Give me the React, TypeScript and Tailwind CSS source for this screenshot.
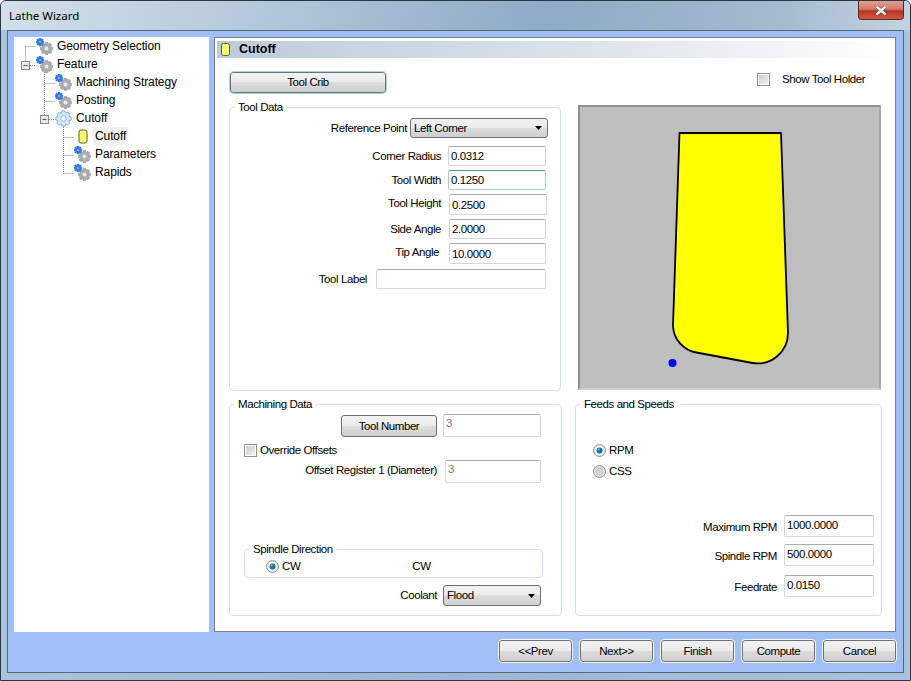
import React from "react";

function gearPath(cx: number, cy: number, ro: number, ri: number, teeth: number) {
  const pts: string[] = [];
  const step = (Math.PI * 2) / teeth;
  for (let i = 0; i < teeth; i++) {
    const a = i * step;
    const seq: [number, number][] = [
      [ri, a - step * 0.5],
      [ro, a - step * 0.25],
      [ro, a + step * 0.25],
    ];
    seq.forEach(([r, t]) => pts.push(`${(cx + r * Math.cos(t)).toFixed(2)} ${(cy + r * Math.sin(t)).toFixed(2)}`));
  }
  return "M" + pts.join("L") + "Z";
}

function GearPair() {
  return (
    <svg width="17" height="17" viewBox="0 0 17 17" className="shrink-0 mt-[1px]">
      <path d={gearPath(10.5, 10.5, 6.3, 4.6, 8)} fill="#a9acb1" stroke="#8b8e93" strokeWidth="0.5" />
      <circle cx="10.5" cy="10.5" r="2" fill="#e8e8ea" />
      <path d={gearPath(4, 4, 4, 2.8, 8)} fill="#2f7ce6" stroke="#1f62c8" strokeWidth="0.4" />
      <circle cx="4" cy="4" r="1.1" fill="#8fbdf5" />
    </svg>
  );
}

function OpenGear() {
  return (
    <svg width="17" height="17" viewBox="0 0 17 17" className="shrink-0">
      <path d={gearPath(8.5, 8.5, 7.8, 5.9, 8)} fill="#d5e6fb" stroke="#80b3ee" strokeWidth="1" />
      <circle cx="8.5" cy="8.5" r="2.8" fill="#ffffff" stroke="#80b3ee" strokeWidth="1" />
    </svg>
  );
}

function ToolIcon() {
  return (
    <svg width="10" height="15" viewBox="0 0 10 15" className="shrink-0">
      <rect x="1" y="1" width="8" height="13" rx="2" fill="#ffff66" stroke="#555a40" strokeWidth="1" />
    </svg>
  );
}

function TreeRow({ indent, icon, text, selected }: { indent: string; icon: React.ReactNode; text: string; selected?: boolean }) {
  return (
    <div className={`flex h-[18px] items-center ${indent}`}>
      <span className="flex w-[17px] justify-center">{icon}</span>
      <span className={`ml-[2px] px-[2px] leading-[18px] ${selected ? "bg-[#f0f0f0]" : ""}`}>{text}</span>
    </div>
  );
}

function Tree() {
  return (
    <div className="relative h-[595px] w-[195px] bg-white text-[12px] tracking-[-0.1px] text-black">
      <svg className="absolute left-0 top-0" width="80" height="150" fill="none" stroke="#808080" strokeDasharray="1 1">
        <path d="M11.5 9.5H22M11.5 9.5V24" />
        <path d="M16 28.5H22" />
        <path d="M30.5 33V78M30.5 46.5H41M30.5 64.5H41" />
        <path d="M35 82.5H41" />
        <path d="M49.5 88V136.5M49.5 100.5H60M49.5 118.5H60M49.5 136.5H60" />
        <rect x="7.5" y="24.5" width="8" height="8" fill="#e8e8e8" stroke="#8a8a8a" strokeDasharray="none" />
        <path d="M9.5 28.5H13.5" stroke="#4a5a70" strokeDasharray="none" />
        <rect x="26.5" y="78.5" width="8" height="8" fill="#e8e8e8" stroke="#8a8a8a" strokeDasharray="none" />
        <path d="M28.5 82.5H32.5" stroke="#4a5a70" strokeDasharray="none" />
      </svg>
      <div className="relative">
        <TreeRow indent="pl-[22px]" icon={<GearPair />} text="Geometry Selection" />
        <TreeRow indent="pl-[22px]" icon={<GearPair />} text="Feature" />
        <TreeRow indent="pl-[41px]" icon={<GearPair />} text="Machining Strategy" />
        <TreeRow indent="pl-[41px]" icon={<GearPair />} text="Posting" />
        <TreeRow indent="pl-[41px]" icon={<OpenGear />} text="Cutoff" />
        <TreeRow indent="pl-[60px]" icon={<ToolIcon />} text="Cutoff" selected />
        <TreeRow indent="pl-[60px]" icon={<GearPair />} text="Parameters" />
        <TreeRow indent="pl-[60px]" icon={<GearPair />} text="Rapids" />
      </div>
    </div>
  );
}

function Group({ title, className, children }: { title: string; className: string; children?: React.ReactNode }) {
  return (
    <div className={`relative rounded-[4px] border border-[#d5dfe5] ${className}`}>
      <span className="absolute left-[4px] top-[-8px] whitespace-nowrap bg-white px-[4px] leading-[14px]">{title}</span>
      {children}
    </div>
  );
}

function TextBox({ value, className, muted }: { value: string; className: string; muted?: boolean }) {
  return (
    <input
      readOnly
      value={value}
      className={`shrink-0 rounded-[2px] border bg-white px-[2px] text-[11.5px] tracking-[-0.4px] outline-none ${muted ? "text-[#8a6d6d]" : "text-black"} ${className}`}
    />
  );
}

const boxBorder = "border-[#d3d6d9] border-t-[#a9acb0]";

function Combo({ value, className }: { value: string; className: string }) {
  return (
    <div className={`flex shrink-0 items-center justify-between rounded-[3px] border border-[#707070] bg-[linear-gradient(#f2f2f2_0%,#ebebeb_48%,#dddddd_50%,#cfcfcf_100%)] pl-[3px] pr-[5px] ${className}`}>
      <span>{value}</span>
      <svg width="7" height="4" viewBox="0 0 7 4">
        <path d="M0 0H7L3.5 4Z" fill="#000" />
      </svg>
    </div>
  );
}

function Btn({ label, className }: { label: string; className: string }) {
  return (
    <button className={`flex shrink-0 items-center justify-center rounded-[3px] border border-[#707070] bg-[linear-gradient(#f2f2f2_0%,#ebebeb_48%,#dddddd_50%,#cfcfcf_100%)] text-black ${className}`}>
      {label}
    </button>
  );
}

function WizBtn({ label }: { label: string }) {
  return <Btn label={label} className="h-[22px] w-[73px] outline outline-1 outline-[#f4f7fc]" />;
}

function Check() {
  return (
    <span className="block h-[13px] w-[13px] shrink-0 border border-[#8e8f8f] bg-white p-[1px]">
      <span className="block h-full w-full bg-[linear-gradient(135deg,#cbcfd4,#eeeff1)]" />
    </span>
  );
}

function Radio({ on }: { on?: boolean }) {
  return (
    <svg width="13" height="13" viewBox="0 0 13 13" className="shrink-0">
      <circle cx="6.5" cy="6.5" r="6" fill="#e6e6e6" stroke="#8e8f8f" />
      <circle cx="6.5" cy="6.5" r="4.5" fill={on ? "#f6f6f6" : "#d2d2d2"} />
      {on && <circle cx="6.5" cy="6.5" r="3" fill="#0f6fb0" />}
      {on && <circle cx="5.8" cy="5.6" r="1" fill="#7cc4ee" />}
    </svg>
  );
}

function Preview() {
  return (
    <div className="ml-[17px] mt-[12px] h-[285px] w-[303px] border-2 border-[#8f8f8f] border-r-[#a8a8a8] border-b-[#d0d0d0] bg-[#bebebe]">
      <svg width="299" height="281" viewBox="0 0 299 281">
        <path
          d="M99.5 26H201L208 226A30.5 30.5 0 0 1 172.5 256L116.5 245.5A28 28 0 0 1 93 219Z"
          fill="#ffff00"
          stroke="#000"
          strokeWidth="1.8"
          strokeLinejoin="round"
        />
        <circle cx="92.5" cy="256" r="4" fill="#0000ff" />
      </svg>
    </div>
  );
}

export default function App() {
  return (
    <div className="flex h-[681px] w-[911px] flex-col overflow-hidden rounded-t-[6px] border border-[#2b3642] bg-[linear-gradient(90deg,#a9c3da,#9ab8d4_50%,#a9c3da)] font-['Liberation_Sans',Arial,sans-serif] text-[11.5px] leading-[13px] tracking-[-0.42px] text-black">
      <div className="flex h-[29px] shrink-0 items-start justify-between bg-[linear-gradient(100deg,#d3dfe9_0%,#b7cbdc_25%,#8eaac6_60%,#a3bacf_85%,#c3d3e1_100%)]">
        <span className="ml-[8px] mt-[5px] font-['Noto_Sans',sans-serif] text-[11.5px] leading-[20px] tracking-normal">Lathe Wizard</span>
        <div className="mr-[6px] flex h-[19px] w-[46px] items-center justify-center rounded-b-[4px] border border-t-0 border-[#5a2a26] bg-[linear-gradient(#e0a090_0%,#d47a66_45%,#b8331f_55%,#cf5a42_100%)]">
          <svg width="14" height="11" viewBox="0 0 14 11">
            <path d="M2.5 1.5L11.5 9.5M11.5 1.5L2.5 9.5" stroke="#3a3f4a" strokeWidth="3.6" />
            <path d="M2.5 1.5L11.5 9.5M11.5 1.5L2.5 9.5" stroke="#eef0f2" strokeWidth="2.4" />
          </svg>
        </div>
      </div>

      <div className="mx-[6px] flex h-[643px] shrink-0 flex-col border border-[#56677a] bg-[#a0bff4]">
        <div className="flex pl-[6px] pt-[6px]">
          <Tree />
          <div className="ml-[5px] flex h-[595px] w-[682px] flex-col border border-[#7a7f88] bg-white">
            <div className="ml-[2px] mt-[3px] flex h-[17px] w-[677px] items-center bg-[linear-gradient(90deg,#bccbdb_0%,#dce3ea_55%,#ffffff_100%)]">
              <span className="ml-[3px] flex w-[10px] justify-center">
                <svg width="9" height="13" viewBox="0 0 9 13">
                  <rect x="0.5" y="0.5" width="8" height="12" rx="2" fill="#ffff66" stroke="#555a40" />
                </svg>
              </span>
              <span className="ml-[9px] text-[12.5px] font-bold tracking-normal">Cutoff</span>
            </div>

            <div className="mt-[14px] flex items-start">
              <Btn
                label="Tool Crib"
                className="ml-[15px] h-[21px] w-[156px] border-[#3c7fb1] outline outline-1 outline-[#a9d7ef]"
              />
              <div className="ml-auto mr-[27px] mt-[1px] flex w-[111px] items-center">
                <Check />
                <span className="ml-[12px] whitespace-nowrap">Show Tool Holder</span>
              </div>
            </div>

            <div className="flex items-start">
              <Group title="Tool Data" className="ml-[14px] mt-[14px] flex h-[284px] w-[332px] flex-col items-end">
                <div className="mr-[12px] mt-[10px] flex items-center">
                  <span>Reference Point</span>
                  <Combo value="Left Corner" className="ml-[3px] h-[20px] w-[138px]" />
                </div>
                <div className="mr-[14px] mt-[8px] flex items-center">
                  <span>Corner Radius</span>
                  <TextBox value="0.0312" className={`ml-[7px] h-[20px] w-[98px] ${boxBorder}`} />
                </div>
                <div className="mr-[14px] mt-[4px] flex items-center">
                  <span>Tool Width</span>
                  <TextBox value="0.1250" className="ml-[7px] h-[20px] w-[98px] border-[#a8cbe0] border-t-[#5a8fb5]" />
                </div>
                <div className="mr-[13px] mt-[4px] flex items-center">
                  <span className="mb-[3px]">Tool Height</span>
                  <TextBox value="0.2500" className={`ml-[8px] h-[21px] w-[98px] ${boxBorder}`} />
                </div>
                <div className="mr-[14px] mt-[4px] flex items-center">
                  <span>Side Angle</span>
                  <TextBox value="2.0000" className={`ml-[8px] h-[20px] w-[97px] ${boxBorder}`} />
                </div>
                <div className="mr-[14px] mt-[4px] flex items-center">
                  <span className="mb-[2px]">Tip Angle</span>
                  <TextBox value="10.0000" className={`ml-[10px] h-[21px] w-[97px] ${boxBorder}`} />
                </div>
                <div className="mr-[14px] mt-[5px] flex items-center">
                  <span>Tool Label</span>
                  <TextBox value="" className={`ml-[9px] h-[20px] w-[170px] ${boxBorder}`} />
                </div>
              </Group>
              <Preview />
            </div>

            <div className="mt-[13px] flex items-start">
              <Group title="Machining Data" className="ml-[14px] flex h-[212px] w-[333px] flex-col">
                <div className="mr-[20px] mt-[9px] flex items-start justify-end">
                  <Btn label="Tool Number" className="mt-[1px] h-[22px] w-[96px]" />
                  <TextBox value="3" muted className={`ml-[6px] h-[23px] w-[98px] pb-[5px] ${boxBorder}`} />
                </div>
                <div className="ml-[14px] mt-[7px] flex items-center">
                  <Check />
                  <span className="ml-[3px]">Override Offsets</span>
                </div>
                <div className="mr-[20px] mt-[3px] flex items-center justify-end">
                  <span className="mb-[3px]">Offset Register 1 (Diameter)</span>
                  <TextBox value="3" muted className={`ml-[8px] h-[23px] w-[96px] pb-[5px] ${boxBorder}`} />
                </div>
                <Group title="Spindle Direction" className="ml-[14px] mt-[66px] flex h-[29px] w-[299px] items-start pl-[21px] pt-[10px]">
                  <Radio on />
                  <span className="ml-[3px]">CW</span>
                  <span className="ml-[112px]">CW</span>
                </Group>
                <div className="mr-[20px] mt-[7px] flex items-center justify-end">
                  <span className="mb-[1px]">Coolant</span>
                  <Combo value="Flood" className="ml-[6px] h-[21px] w-[98px]" />
                </div>
              </Group>

              <Group title="Feeds and Speeds" className="ml-[13px] flex h-[212px] w-[307px] flex-col">
                <div className="ml-[17px] mt-[39px] flex items-center">
                  <Radio on />
                  <span className="ml-[3px]">RPM</span>
                </div>
                <div className="ml-[17px] mt-[8px] flex items-center">
                  <Radio />
                  <span className="ml-[3px]">CSS</span>
                </div>
                <div className="mr-[7px] mt-[37px] flex items-center justify-end">
                  <span className="mt-[2px]">Maximum RPM</span>
                  <TextBox value="1000.0000" className={`ml-[7px] h-[22px] w-[90px] pb-[3px] ${boxBorder}`} />
                </div>
                <div className="mr-[7px] mt-[7px] flex items-center justify-end">
                  <span className="mt-[2px]">Spindle RPM</span>
                  <TextBox value="500.0000" className={`ml-[7px] h-[22px] w-[90px] pb-[3px] ${boxBorder}`} />
                </div>
                <div className="mr-[7px] mt-[9px] flex items-center justify-end">
                  <span className="mt-[2px]">Feedrate</span>
                  <TextBox value="0.0150" className={`ml-[7px] h-[22px] w-[90px] pb-[3px] ${boxBorder}`} />
                </div>
              </Group>
            </div>
          </div>
        </div>

        <div className="mr-[7px] mt-[8px] flex justify-end gap-[8px]">
          <WizBtn label="<<Prev" />
          <WizBtn label="Next>>" />
          <WizBtn label="Finish" />
          <WizBtn label="Compute" />
          <WizBtn label="Cancel" />
        </div>
      </div>
    </div>
  );
}
